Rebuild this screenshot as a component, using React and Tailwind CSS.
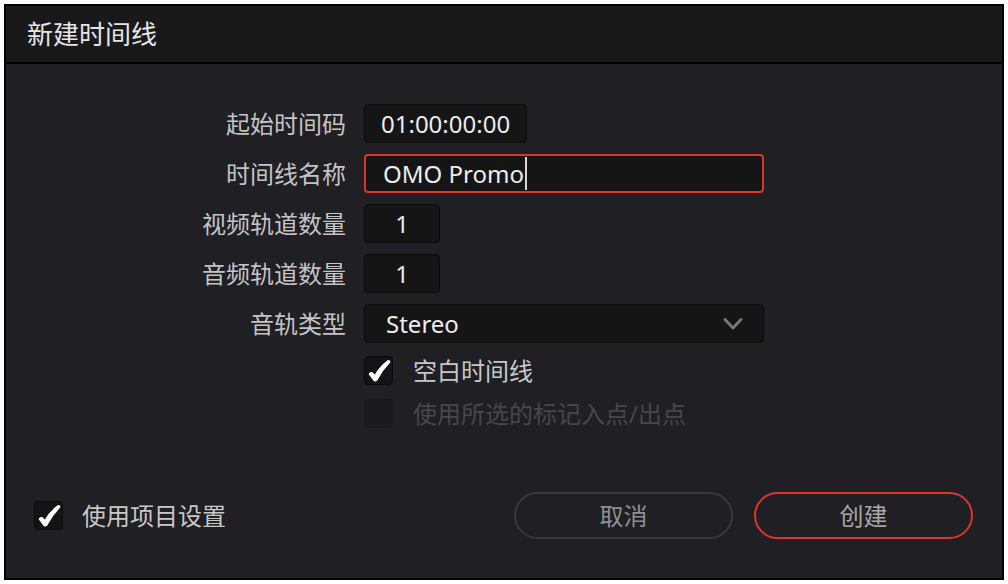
const font = { fontFamily: '"Noto Sans", "Noto Sans CJK SC", sans-serif' };

function Check({ checked, disabled }) {
  return (
    <div
      className={
        "w-[29px] h-[29px] rounded-[4px] border flex items-center justify-center " +
        (disabled ? "bg-[#1b1b1f] border-[#18181b]" : "bg-[#141415] border-[#0b0b0c]")
      }
    >
      {checked && (
        <svg width="29" height="29" viewBox="0 0 29 29" className="shrink-0">
          <path
            d="M5.6 18 Q6.8 16.6 8.2 17.2 L10.8 20.2 Q16 11 24.2 5 Q25.6 4.6 25.4 6.2 Q18 13.8 12.6 23.8 Q11.2 25.2 9.8 23.8 Z"
            fill="#ffffff"
            stroke="#ffffff"
            strokeWidth="1.8"
            strokeLinejoin="round"
          />
        </svg>
      )}
    </div>
  );
}

function Field({ className, children }) {
  return (
    <div className={"h-[39px] rounded-[4px] bg-[#151516] border border-[#0b0b0c] flex items-center text-[24px] text-[#ececec] " + className}>
      {children}
    </div>
  );
}

export default function App() {
  return (
    <div className="w-[1008px] h-[584px] bg-white p-[4px]" style={font}>
      <div className="w-full h-full border-2 border-black bg-[#1f1f24] flex flex-col">
        {/* Title bar */}
        <div className="h-[58px] shrink-0 bg-[#19191b] border-b-2 border-black flex items-center pl-[21px]">
          <span className="text-[26px] text-[#e6e6e6] leading-none">新建时间线</span>
        </div>

        {/* Form */}
        <div className="grid grid-cols-[340px_1fr] gap-x-[18px] gap-y-[11px] pt-[40px] items-center">
          <span className="text-right text-[24px] text-[#c4c4c4] leading-none">起始时间码</span>
          <Field className="w-[163px] pl-[16px]">01:00:00:00</Field>

          <span className="text-right text-[24px] text-[#c4c4c4] leading-none">时间线名称</span>
          <div className="w-[400px] h-[39px] rounded-[4px] bg-[#151516] border-2 border-[#db352d] flex items-center pl-[17px] text-[24px] text-[#ececec]">
            <span>OMO Promo</span>
            <span className="w-[2px] h-[33px] bg-[#d8d8d8] ml-[1px]"></span>
          </div>

          <span className="text-right text-[24px] text-[#c4c4c4] leading-none">视频轨道数量</span>
          <Field className="w-[76px] justify-center">1</Field>

          <span className="text-right text-[24px] text-[#c4c4c4] leading-none">音频轨道数量</span>
          <Field className="w-[76px] justify-center">1</Field>

          <span className="text-right text-[24px] text-[#c4c4c4] leading-none">音轨类型</span>
          <Field className="w-[400px] pl-[21px] pr-[20px] justify-between">
            <span>Stereo</span>
            <svg width="20" height="14" viewBox="0 0 20 14">
              <path d="M2 2.5 L10 11 L18 2.5" fill="none" stroke="#7a7a7c" strokeWidth="2.8" strokeLinecap="round" strokeLinejoin="round" />
            </svg>
          </Field>

          <span></span>
          <div className="flex items-center gap-[20px] mt-[2px]">
            <Check checked />
            <span className="text-[24px] text-[#c8c8c8] leading-none">空白时间线</span>
          </div>

          <span></span>
          <div className="flex items-center gap-[20px] mt-[3px]">
            <Check disabled />
            <span className="text-[24px] text-[#47474c] leading-none">使用所选的标记入点/出点</span>
          </div>
        </div>

        {/* Footer */}
        <div className="mt-auto pb-[39px] pl-[28px] pr-[29px] flex items-center justify-between">
          <div className="flex items-center gap-[19px]">
            <Check checked />
            <span className="text-[24px] text-[#c8c8c8] leading-none">使用项目设置</span>
          </div>
          <div className="flex items-center gap-[21px]">
            <button className="w-[219px] h-[47px] rounded-full border-2 border-[#38393e] text-[24px] text-[#8e8e90] flex items-center justify-center">
              取消
            </button>
            <button className="w-[219px] h-[47px] rounded-full border-2 border-[#db352d] text-[24px] text-[#a8a8a8] flex items-center justify-center">
              创建
            </button>
          </div>
        </div>
      </div>
    </div>
  );
}
